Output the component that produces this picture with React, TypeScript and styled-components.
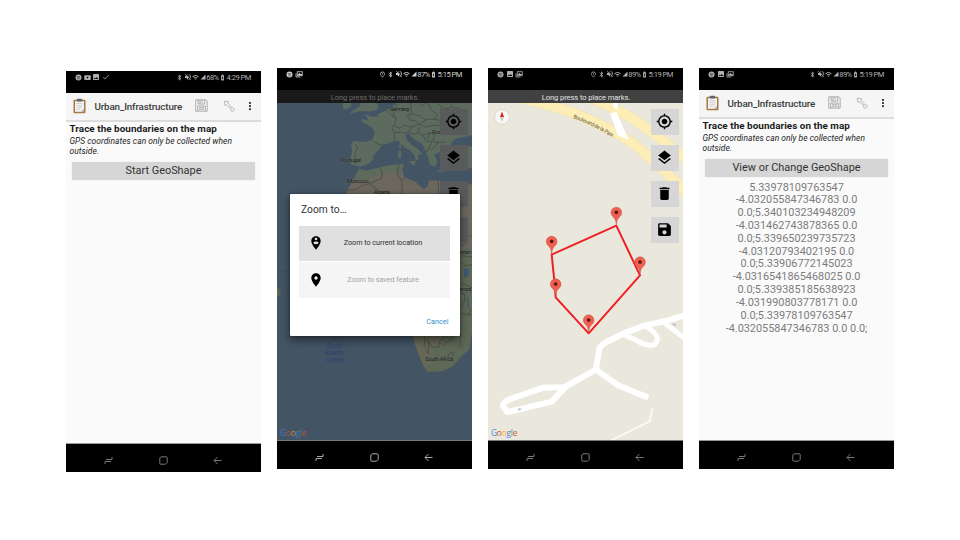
import React from "react";
import styled, { createGlobalStyle, css } from "styled-components";
import {
  MdMyLocation, MdLayers, MdDelete, MdSave, MdPersonPinCircle, MdPlace, MdBluetooth,
  MdVolumeOff, MdSignalCellular4Bar, MdWifi, MdBatteryChargingFull, MdCheck, MdImage, MdOutlinePlace,
} from "react-icons/md";

const Global = createGlobalStyle`
  * { box-sizing: border-box; }
  body { margin: 0; background: #fff; font-family: Roboto, "Liberation Sans", sans-serif; }
`;

const Board = styled.main`
  width: 960px;
  height: 540px;
  padding: 68px 66px 0;
  display: flex;
  align-items: flex-start;
  gap: 16px;
  overflow: hidden;
  background: #fff;
`;

const Phone = styled.section<{ $drop?: boolean }>`
  width: 195px;
  height: 401px;
  margin-top: ${(p) => (p.$drop ? 3 : 0)}px;
  display: flex;
  flex-direction: column;
  background: #000;
  overflow: hidden;
`;

const Status = styled.header<{ $right: number; $bright?: boolean }>`
  height: 22px;
  flex: none;
  padding: 0 ${(p) => p.$right}px 10px 9px;
  display: flex;
  align-items: center;
  justify-content: space-between;
  color: ${(p) => (p.$bright ? "#cfcfcf" : "#b0b0b0")};
  font-size: 7.6px;
  line-height: 12px;
  white-space: nowrap;
`;

const StatusGroup = styled.div<{ $gap: number }>`
  display: flex;
  align-items: center;
  gap: ${(p) => p.$gap}px;
  svg { display: block; flex: none; }
`;

const StatusText = styled.span<{ $spacing: number }>`
  letter-spacing: ${(p) => p.$spacing}px;
  padding-top: 1px;
`;

const AppBar = styled.div`
  height: 29px;
  flex: none;
  display: flex;
  align-items: center;
  padding: 0 7px 2px 6px;
  background: #f5f5f5;
  border-bottom: 2px solid #dcdcdc;
`;

const AppTitle = styled.h1`
  margin: 0 0 0 7.5px;
  width: 99px;
  font-size: 9.8px;
  font-weight: 500;
  letter-spacing: -0.14px;
  color: #3a3a3a;
  padding-top: 1px;
`;

const BarIcon = styled.div<{ $left: number }>`
  margin-left: ${(p) => p.$left}px;
  display: flex;
`;

const Screen = styled.div`
  flex: 1;
  min-height: 0;
  background: #fafafa;
  border-bottom: 1px solid #9a9a9a;
  padding: 1px 6px 0 3.5px;
  display: flex;
  flex-direction: column;
`;

const Question = styled.h2`
  margin: 0;
  font-size: 9.9px;
  line-height: 12px;
  font-weight: 700;
  letter-spacing: 0.05px;
  color: #1b1b1b;
  white-space: nowrap;
`;

const Hint = styled.p`
  margin: 1px 0 0;
  font-size: 8.4px;
  line-height: 10px;
  font-style: italic;
  font-weight: 400;
  letter-spacing: 0.06px;
  color: #222;
  white-space: nowrap;
`;

const Action = styled.button`
  margin: 6px 0 0 2.5px;
  height: 18px;
  padding: 0;
  flex: none;
  border: 0;
  border-radius: 1px;
  background: #d6d6d6;
  font: 400 10.9px/18px Roboto, sans-serif;
  color: #333;
  box-shadow: 0 0 1px #c4c4c4;
`;

const Answer = styled.p`
  margin: 4.5px -6px 0 -3.5px;
  text-align: center;
  font-size: 10.9px;
  line-height: 12.83px;
  color: #7c7c7c;
  span { display: block; }
`;

const NavBar = styled.nav`
  height: 28px;
  flex: none;
  display: flex;
  justify-content: center;
  align-items: center;
  gap: 45.5px;
  padding: 5px 1px 0 0;
  background: #000;
`;

const Notice = styled.div<{ $dim?: boolean }>`
  height: 13px;
  flex: none;
  text-align: center;
  font-size: 7.6px;
  line-height: 15px;
  letter-spacing: -0.1px;
  padding-left: 1px;
  background: ${(p) => (p.$dim ? "#1a1a1a" : "#414141")};
  color: ${(p) => (p.$dim ? "#6a6a6a" : "#e2e2e2")};
`;

const MapArea = styled.div`
  position: relative;
  flex: 1;
  min-height: 0;
  border-bottom: 1px solid #777;
  overflow: hidden;
`;

const MapSvg = styled.svg`
  display: block;
  width: 195px;
  height: 337px;
`;

const Tools = styled.div`
  position: absolute;
  top: 5.5px;
  right: 4.5px;
  display: flex;
  flex-direction: column;
  gap: 10px;
`;

const Tool = styled.button<{ $dim?: boolean }>`
  width: 28px;
  height: 26px;
  padding: 0;
  border: 0;
  display: flex;
  align-items: center;
  justify-content: center;
  color: #000;
  background: ${(p) => (p.$dim ? "#585a5b" : "#d6d6d6")};
`;

const Compass = styled.div`
  position: absolute;
  left: 6px;
  top: 6px;
  width: 16px;
  height: 16px;
  border-radius: 50%;
  background: #f7f7f6;
  border: 1px solid #d8d6ce;
  display: flex;
  align-items: center;
  justify-content: center;
`;

const Google = styled.div<{ $dim?: boolean }>`
  position: absolute;
  left: 3px;
  bottom: 1.5px;
  font: 500 8.4px/13px "Open Sans", sans-serif;
  letter-spacing: -0.25px;
  opacity: ${(p) => (p.$dim ? 0.7 : 1)};
`;
const Letter = styled.span<{ $c: string }>`color: ${(p) => p.$c};`;

const Dialog = styled.div`
  position: absolute;
  left: 12.5px;
  top: 91px;
  width: 170px;
  height: 141.5px;
  padding: 8px 9.5px 0;
  background: #fff;
  border-radius: 1px;
  box-shadow: 0 4px 9px rgba(0, 0, 0, 0.5), 0 0 3px rgba(0, 0, 0, 0.3);
`;

const DialogTitle = styled.h3`
  margin: 0 0 8px 2px;
  font-size: 10.2px;
  line-height: 16px;
  font-weight: 400;
  letter-spacing: 0.08px;
  color: #333;
`;

const Option = styled.button<{ $off?: boolean }>`
  width: 151px;
  height: ${(p) => (p.$off ? 36 : 34.5)}px;
  margin: 0 0 1px;
  padding: 0 0 0 9px;
  border: 0;
  display: flex;
  align-items: center;
  font: 400 7.2px/10px Roboto, sans-serif;
  letter-spacing: -0.02px;
  white-space: nowrap;
  background: ${(p) => (p.$off ? "#f5f5f5" : "#e0e0e0")};
  ${(p) => p.$off ? css`color: #a3a3a3;` : css`color: #2d2d2d;`}
  svg { color: #000; flex: none; }
`;

const OptionLabel = styled.span`
  flex: 1;
  text-align: center;
  padding-right: 8px;
`;

const Cancel = styled.button`
  display: block;
  margin: 18px 1.5px 0 auto;
  padding: 0;
  border: 0;
  background: none;
  font: 400 7.3px/12px Roboto, sans-serif;
  color: #2f93cc;
`;

const Spot = () => (
  <svg width="7" height="7" viewBox="0 0 14 14">
    <circle cx="7" cy="7" r="6" fill="currentColor" />
    <path d="M3.5 5.2q4-1.2 7 .7M4 7.6q3.300-.9 6 .6M4.500 9.800q2.500-.7 4.500.4" stroke="#222" strokeWidth="1.100" fill="none" />
  </svg>
);
const Video = () => (
  <svg width="7" height="7" viewBox="0 0 14 14">
    <rect x="0.500" y="2.500" width="13" height="9.500" rx="2" fill="currentColor" />
    <path d="M5.500 4.800 9.500 7.200 5.500 9.600z" fill="#000" />
  </svg>
);
const Stack = () => (
  <svg width="8" height="7" viewBox="0 0 16 14" fill="none" stroke="currentColor" strokeWidth="1.600">
    <path d="M2 12V4.500M2 12H11" />
    <rect x="4.500" y="1.500" width="10" height="8" />
    <path d="M6 8 9 4.500 11 7 12 6 13.500 8z" fill="currentColor" />
  </svg>
);

type StatusProps = { left: React.ReactNode; battery: string; time: string; pin?: boolean; bright?: boolean; right?: number };
const StatusBar = ({ left, battery, time, pin, bright, right = 10 }: StatusProps) => (
  <Status $right={right} $bright={bright}>
    <StatusGroup $gap={1.5}>{left}</StatusGroup>
    <StatusGroup $gap={0.6}>
      {pin && <MdOutlinePlace size={7} />}
      <MdBluetooth size={7} />
      <MdVolumeOff size={8} />
      <MdWifi size={7} />
      <MdSignalCellular4Bar size={6} />
      <StatusText $spacing={-0.7}>{battery}</StatusText>
      <MdBatteryChargingFull size={7} />
      <StatusText $spacing={-0.5}>{time}</StatusText>
    </StatusGroup>
  </Status>
);

const Nav = ({ bright }: { bright?: boolean }) => {
  const c = bright ? "#aaa" : "#777";
  return (
    <NavBar>
      <svg width="9" height="9" viewBox="0 0 9 9" fill="none" stroke={c} strokeWidth="1">
        <path d="M1 8V5.500H7M8 1V3.500H2" />
      </svg>
      <svg width="9" height="9" viewBox="0 0 9 9" fill="none" stroke={c} strokeWidth="1">
        <path d="M2 .8H7.500Q8.200.8 8.200 1.500V6.500L6.500 8.200H1.500Q.8 8.200.8 7.500V2z" />
      </svg>
      <svg width="9" height="9" viewBox="0 0 9 9" fill="none" stroke={c} strokeWidth="1">
        <path d="M8.500 4.500H1M4.500 1 1 4.500 4.500 8" />
      </svg>
    </NavBar>
  );
};

const Clipboard = () => (
  <svg width="15" height="16" viewBox="0 0 15 16">
    <rect x="1.500" y="1.700" width="12" height="13.500" rx="1" fill="#a9773f" />
    <path d="M3 3.200H12V13.800H3z" fill="#f2f2f2" />
    <path d="M9 13.800 12 11V13.800z" fill="#aaa" />
    <rect x="4.800" y=".7" width="5.400" height="2.800" rx=".8" fill="#62676b" />
    <path d="M4.300 5.500H10.500M4.300 7.400H10.500M4.300 9.300H10M4.300 11.200H8.500" stroke="#c5c5c5" strokeWidth=".7" />
  </svg>
);

const FormBar = () => (
  <AppBar>
    <Clipboard />
    <AppTitle>Urban_Infrastructure</AppTitle>
    <BarIcon $left={1.5}>
      <svg width="13" height="13" viewBox="0 0 13 13" fill="none" stroke="#9f9f9f" strokeWidth=".8">
        <path d="M.7.800H11L12.200 2V12.200H.7z" fill="#f0f0f0" />
        <path d="M3.200.8V5H9.700V.8M5 .8V5M7 .8V3.800M2.700 12V7H10.300V12M4 8.700H9M4 10.300H9" />
      </svg>
    </BarIcon>
    <BarIcon $left={14.5}>
      <svg width="12" height="12" viewBox="0 0 12 12" fill="none" stroke="#aaa" strokeWidth=".8">
        <path d="M1.200 1.200 5.500 1.600 4.800 3 8 6.500 6.800 8 3.500 4.600 2 5.600z" />
        <circle cx="9.300" cy="9.400" r="1.800" />
      </svg>
    </BarIcon>
    <BarIcon $left={13}>
      <svg width="4" height="10" viewBox="0 0 4 10" fill="#333">
        <rect x="1" y="1" width="1.900" height="1.900" /><rect x="1" y="4.100" width="1.900" height="1.900" /><rect x="1" y="7.200" width="1.900" height="1.900" />
      </svg>
    </BarIcon>
  </AppBar>
);

const Form = ({ action, children }: { action: string; children?: React.ReactNode }) => (
  <>
    <FormBar />
    <Screen>
      <Question>Trace the boundaries on the map</Question>
      <Hint>GPS coordinates can only be collected when<br />outside.</Hint>
      <Action>{action}</Action>
      {children}
    </Screen>
  </>
);

const toolIcons = [MdMyLocation, MdLayers, MdDelete, MdSave];
const ToolColumn = ({ dim }: { dim?: boolean }) => (
  <Tools>
    {toolIcons.map((Icon, i) => <Tool key={i} $dim={dim}><Icon size={17} /></Tool>)}
  </Tools>
);

const blue = "#4a86e8", red = "#e2503f", yellow = "#f2b91c", green = "#3fa757";
const GoogleMark = ({ dim }: { dim?: boolean }) => (
  <Google $dim={dim}>
    {[["G", blue], ["o", red], ["o", yellow], ["g", blue], ["l", green], ["e", red]].map(([l, c], i) => <Letter key={i} $c={c}>{l}</Letter>)}
  </Google>
);

const WorldMap = () => (
  <MapSvg viewBox="15 117 585 1011">
    <rect x="0" y="100" width="620" height="1040" fill="#435464" />
    <g fill="#5d6b5f">
      <path d="M375 100 372 119 360 128 345 138 330 145 318 150 318 158 300 158 280 150 290 170 272 165 266 172 286 182 302 192 308 208 300 229 275 234 247 230 237 240 241 262 234 290 238 302 262 308 290 300 305 285 303 275 322 255 332 243 350 238 365 232 378 230 388 240 400 252 416 260 427 272 432 292 441 284 437 272 452 270 436 254 420 244 405 228 399 212 410 207 418 220 430 228 450 240 461 262 468 280 474 302 490 308 496 292 486 272 502 264 520 268 545 264 536 240 550 224 600 214V100z" />
      <path d="M270 100 262 128 249 136 232 149 262 142 296 142 314 138 320 126 310 112zM214 110H240L236 128 220 137 212 132z" />
      <path d="M382 240 387 238 387 255 382 252zM379 261 388 260 387 282 379 282zM410 292 432 291 427 306zM492 319 520 320 505 325z" />
      <path d="M525 258 560 245 600 248V310L570 318 540 306 526 285z" />
    </g>
    <path d="M262 315 285 320 330 308 365 302 396 301 390 318 396 340 428 352 455 376 468 365 470 350 500 349 535 362 568 366 600 360V798L592 855 565 880 543 906 510 922 466 923 455 905 440 870 425 828 420 700 215 430 221 390 241 350z" fill="#6b675d" />
    <path d="M262 315 285 320 330 308 365 302 396 301 390 318 396 330 370 325 330 330 285 345 240 352z" fill="#5d6a5c" />
    <path d="M563 555H600V800L592 855 565 880 543 906 510 922 466 923 455 905 440 870 425 828V805H563z" fill="#5d6857" />
    <path d="M425 828V805H510L515 846 480 850 468 910 455 905 440 870z" fill="#6c6753" opacity=".6" />
    <path d="M15 668 20 672 26 685 24 694 15 700z" fill="#596758" />
    <path d="M575 615 590 613 590 637 577 640zM584 700 589 703 592 730 588 735z" fill="#405874" />
    <g fill="none" stroke="#353b36" strokeWidth="1.800" strokeLinejoin="round" opacity=".85">
      <path d="M345 140 358 154 372 162 368 182 360 190 366 206 368 230M304 232 320 241 332 243M250 240 257 252 248 272 252 298M357 128 367 138 364 156 372 162M375 120 370 138M368 186 382 192 398 184 419 189 414 201 397 207 386 204 368 207M418 117 416 135 421 150 406 153 414 168 430 170 442 182 419 188M421 150 445 156 460 169 442 180 460 189 482 184 503 184 515 173 493 166 460 166M465 117 480 140 498 151 486 166M500 120 515 136 540 129M442 189 439 205 452 214 473 206 488 213 482 231 497 236 524 233M452 214 463 230 480 234 470 253 463 264M473 206 467 224M497 236 487 252 476 258M441 205 430 210 412 207M515 173 530 185 542 207 560 206M460 117 450 127 443 120M532 117 545 132 566 132" />
      <path d="M322 309 331 327 329 343 294 358 268 366 252 377 226 379M380 303 376 330 389 351 391 380 385 400M389 344 398 346M498 349 501 400M290 358 320 380" />
      <path d="M563 545 576 542 583 519 599 513M568 575 600 579M566 595 580 605 600 602M568 657 600 671M563 685 579 692 577 714 565 729M566 748 599 753M588 754 598 735M458 805 457 844 468 869 471 846 465 827 480 850 500 849 503 832 520 816 528 806M503 836 515 846 527 832 538 828 545 806M546 806 563 800M530 870 542 864 546 872 535 884 528 879zM563 840 559 845 567 851 573 843 565 836V805" />
    </g>
    <path d="M15 622H55" stroke="#34414d" strokeDasharray="4 3" />
    <g fontFamily="Roboto, sans-serif" fontSize="18" fill="#1c201e" stroke="#6a7067" strokeWidth="1" paintOrder="stroke">
      <text x="353" y="141" textLength="60">Germany</text>
      <text x="207" y="294" textLength="60">Portugal</text>
      <text x="225" y="357" textLength="65">Morocco</text>
      <text x="305" y="391" textLength="48">Algeria</text>
      <text x="480" y="211">Romania</text>
      <text x="550" y="569" textLength="47">Sudan</text>
      <text x="552" y="682" textLength="46">Tanza</text>
      <text x="460" y="892" textLength="84">South Africa</text>
    </g>
    <g fontFamily="Roboto, sans-serif" fontSize="19" fontStyle="italic" fill="#2a4370" textAnchor="middle">
      <text x="188" y="851">South</text><text x="188" y="873">Atlantic</text><text x="188" y="895">Ocean</text>
    </g>
  </MapSvg>
);

const pins = [[397, 485], [203, 572], [468, 634], [215, 700], [314, 808]];

const StreetMap = () => (
  <MapSvg viewBox="12 117 585 1011">
    <rect x="0" y="100" width="620" height="1040" fill="#eae8dd" />
    <g fill="none" strokeLinejoin="round">
      <g stroke="#f5e3ab" strokeWidth="31">
        <path d="M90 98Q250 132 350 182T490 275Q540 315 625 405" />
        <path d="M310 98Q400 132 470 180T625 302" />
      </g>
      <g stroke="#fdeeb7" strokeWidth="27">
        <path d="M90 98Q250 132 350 182T490 275Q540 315 625 405" />
        <path d="M310 98Q400 132 470 180T625 302" />
      </g>
      <path d="M378 148 397 144 434 228 401 213zM386 117H403L399 137 387 128z" fill="#fff" />
      <g stroke="#fff" strokeWidth="18" strokeLinecap="round">
        <path d="M610 752 550 770 480 785 415 810 360 838 347 850 340 890 336 917 240 970 178 971 82 1004Q57 1012 57 1026L70 1044 116 1034 203 1013 240 974M336 917 402 964 486 998" />
        <path d="M488 788Q523 812 520 826 517 845 500 844 485 845 455 828L415 810M533 770 598 820" strokeWidth="15" />
      </g>
      <path d="M506 1032 497 1072 380 1130" stroke="#faf9f3" strokeWidth="6" />
    </g>
    <path id="avenue" d="M267 162Q320 180 390 222" fill="none" />
    <text fontFamily="Roboto, sans-serif" fontSize="16" fill="#5c5138"><textPath href="#avenue" textLength="131">Boulevard de la Paix</textPath></text>
    <path d="M101 1037 108 1033 105 1039 113 1034M565 779 574 784 568 780 577 783" fill="none" stroke="#a5aac5" strokeWidth="2" />
    <path d="M397 485 203 572 211 650 215 700 314 808 468 634z" fill="none" stroke="#f01f24" strokeWidth="6" strokeLinejoin="round" />
    {pins.map(([x, y]) => (
      <g key={x} transform={`translate(${x} ${y})`}>
        <path d="M0-1C-1-17-4-20-10-27A16 16 0 1 1 10-27C4-20 1-17 0-1z" fill="#f05f50" stroke="#c04f44" strokeWidth="1.500" />
        <circle cy="-40" r="5.500" fill="#5a1712" />
      </g>
    ))}
  </MapSvg>
);

const answer = [
  "5.33978109763547", "-4.032055847346783 0.0", "0.0;5.340103234948209", "-4.031462743878365 0.0",
  "0.0;5.339650239735723", "-4.03120793402195 0.0", "0.0;5.33906772145023", "-4.0316541865468025 0.0",
  "0.0;5.339385185638923", "-4.031990803778171 0.0", "0.0;5.33978109763547", "-4.032055847346783 0.0 0.0;",
];

export default function App() {
  return (
    <>
      <Global />
      <Board>
        <Phone $drop>
          <StatusBar left={<><Spot /><Video /><MdImage size={8} /><MdCheck size={8} /></>} battery="68%" time="4:29 PM" />
          <Form action="Start GeoShape" />
          <Nav />
        </Phone>
        <Phone>
          <StatusBar left={<><Spot /><Stack /></>} battery="87%" time="5:15 PM" pin bright />
          <Notice $dim>Long press to place marks.</Notice>
          <MapArea>
            <WorldMap />
            <ToolColumn dim />
            <GoogleMark dim />
            <Dialog>
              <DialogTitle>Zoom to…</DialogTitle>
              <Option><MdPersonPinCircle size={16} /><OptionLabel>Zoom to current location</OptionLabel></Option>
              <Option $off><MdPlace size={16} /><OptionLabel>Zoom to saved feature</OptionLabel></Option>
              <Cancel>Cancel</Cancel>
            </Dialog>
          </MapArea>
          <Nav bright />
        </Phone>
        <Phone>
          <StatusBar left={<><Spot /><MdImage size={8} /><Stack /></>} battery="89%" time="5:19 PM" pin />
          <Notice>Long press to place marks.</Notice>
          <MapArea>
            <StreetMap />
            <Compass>
              <svg width="8" height="12" viewBox="0 0 8 12"><path d="M4 .5 6 6H2z" fill="#e02020" /><path d="M4 11 6 6H2z" fill="#ccc" /></svg>
            </Compass>
            <ToolColumn />
            <GoogleMark />
          </MapArea>
          <Nav />
        </Phone>
        <Phone>
          <StatusBar left={<><Spot /><MdImage size={8} /><Stack /></>} battery="89%" time="5:19 PM" />
          <Form action="View or Change GeoShape">
            <Answer>{answer.map((line, i) => <span key={i}>{line}</span>)}</Answer>
          </Form>
          <Nav />
        </Phone>
      </Board>
    </>
  );
}
